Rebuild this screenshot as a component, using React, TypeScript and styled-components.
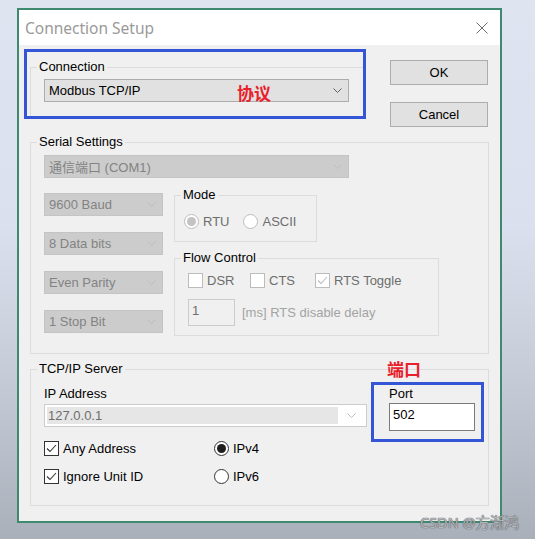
import React from 'react';
import styled, { createGlobalStyle } from 'styled-components';

const GlobalStyle = createGlobalStyle`
  html, body {
    margin: 0;
    padding: 0;
  }
  body {
    width: 535px;
    height: 539px;
    overflow: hidden;
    background: linear-gradient(180deg, #dfe4f1 0%, #dae0ed 42%, #c4cad5 72%, #a9b0ba 100%);
    font-family: "Liberation Sans", Arial, "Noto Sans CJK SC", sans-serif;
    font-size: 13px;
    color: #000;
  }
`;

const Page = styled.div`
  position: relative;
  box-sizing: border-box;
  width: 535px;
  height: 539px;
  padding: 8px 0 0 17px;
`;

const Window = styled.div`
  box-sizing: border-box;
  width: 485px;
  height: 515px;
  border: 2px solid #3f8a6f;
  background: #f0f0f0;
  display: flex;
  flex-direction: column;
`;

const TitleBar = styled.div`
  height: 35px;
  flex: none;
  background: #fff;
  display: flex;
  align-items: center;
  justify-content: space-between;
  padding: 0 12px 0 6px;
`;

const Title = styled.span`
  font-family: "Noto Sans", "Open Sans", sans-serif;
  font-size: 15.5px;
  color: #9a9a9a;
`;

const Body = styled.div`
  display: flex;
  flex-direction: column;
  padding: 4px 11px 0 5px;
`;

const TopRow = styled.div`
  display: flex;
  align-items: flex-start;
  gap: 24px;
`;

const Highlight = styled.div<{ $w: number; $h: number; $clip?: boolean }>`
  position: relative;
  box-sizing: border-box;
  flex: none;
  width: ${p => p.$w}px;
  height: ${p => p.$h}px;
  border: 3px solid #3456d6;
  overflow: ${p => (p.$clip ? 'hidden' : 'visible')};
`;

const PortHighlight = styled(Highlight)`
  margin-top: 5px;
`;

const Note = styled.span<{ $x: number; $y: number }>`
  position: absolute;
  left: ${p => p.$x}px;
  top: ${p => p.$y}px;
  font-family: "Noto Sans CJK SC", sans-serif;
  font-size: 17px;
  line-height: 17px;
  font-weight: 700;
  color: #e8202a;
  white-space: nowrap;
`;

const ButtonColumn = styled.div`
  display: flex;
  flex-direction: column;
  gap: 17px;
  padding-top: 11px;
`;

const Button = styled.button`
  box-sizing: border-box;
  width: 98px;
  height: 25px;
  margin: 0;
  padding: 0;
  border: 1px solid #adadad;
  background: #e1e1e1;
  font-family: inherit;
  font-size: 13px;
  color: #000;
`;

const GroupBox = styled.fieldset<{ $w: number; $h?: number }>`
  box-sizing: border-box;
  flex: none;
  min-width: 0;
  margin: 0;
  padding: 0;
  width: ${p => p.$w}px;
  ${p => (p.$h ? `height: ${p.$h}px;` : '')}
  border: 1px solid #dcdcdc;
`;

const Legend = styled.legend`
  margin-left: 6px;
  padding: 0 2px;
  font-size: 13px;
  line-height: 16px;
  color: #000;
`;

const ConnectionGroup = styled(GroupBox)`
  margin: 7px 0 0 3px;
`;

const ConnectionBody = styled.div`
  padding: 4px 0 0 13px;
`;

const SerialGroup = styled(GroupBox)`
  margin: 7px 0 0 6px;
`;

const SerialBody = styled.div`
  padding: 5px 13px 17px 13px;
`;

const SerialRow = styled.div`
  display: flex;
  gap: 11px;
  margin-top: 9px;
`;

const ComboStack = styled.div`
  display: flex;
  flex-direction: column;
  gap: 16px;
  padding-top: 6px;
`;

const SideStack = styled.div`
  display: flex;
  flex-direction: column;
  gap: 8px;
`;

const ModeBody = styled.div`
  display: flex;
  gap: 14px;
  padding: 11px 0 12px 9px;
`;

const FlowBody = styled.div`
  padding: 7px 0 9px 13px;
`;

const FlowChecks = styled.div`
  display: grid;
  grid-template-columns: 62px 65px auto;
`;

const DelayRow = styled.div`
  display: flex;
  align-items: center;
  gap: 7px;
  margin-top: 11px;
`;

const DelayLabel = styled.span`
  color: #a3a3a3;
`;

const TcpGroup = styled(GroupBox)`
  margin: 7px 0 0 6px;
`;

const TcpBody = styled.div`
  display: flex;
  align-items: flex-start;
  gap: 4px;
  padding: 0 0 21px 13px;
`;

const IpColumn = styled.div`
  display: flex;
  flex-direction: column;
  padding-top: 9px;
`;

const FieldLabel = styled.span`
  line-height: 15px;
  height: 15px;
`;

const OptionGrid = styled.div`
  display: grid;
  grid-template-columns: 170px auto;
  row-gap: 13px;
  margin-top: 14px;
`;

const PortBody = styled.div`
  display: flex;
  flex-direction: column;
  gap: 2px;
  padding: 1px 0 0 15px;
`;

const Combo = styled.div<{ $w: number; $disabled?: boolean }>`
  box-sizing: border-box;
  width: ${p => p.$w}px;
  height: 23px;
  display: flex;
  align-items: center;
  justify-content: space-between;
  padding: 0 6px 0 4px;
  background: ${p => (p.$disabled ? '#cccccc' : '#e1e1e1')};
  border: 1px solid ${p => (p.$disabled ? '#c4c4c4' : '#adadad')};
  color: ${p => (p.$disabled ? '#838383' : '#000')};
  white-space: nowrap;
`;

const EditCombo = styled.div`
  box-sizing: border-box;
  width: 323px;
  height: 23px;
  margin-top: 3px;
  display: flex;
  align-items: center;
  gap: 9px;
  padding: 2px 10px 2px 2px;
  background: #fff;
  border: 1px solid #cccccc;
`;

const EditField = styled.span`
  flex: 1;
  height: 100%;
  display: flex;
  align-items: center;
  padding-left: 1px;
  background: #e6e6e6;
  color: #6d6d6d;
`;

const TextBox = styled.div<{ $w: number; $h: number; $disabled?: boolean }>`
  box-sizing: border-box;
  width: ${p => p.$w}px;
  height: ${p => p.$h}px;
  padding: 3px 3px 0;
  line-height: 15px;
  background: ${p => (p.$disabled ? '#f0f0f0' : '#fff')};
  border: 1px solid ${p => (p.$disabled ? '#cccccc' : '#7a7a7a')};
  color: ${p => (p.$disabled ? '#6d6d6d' : '#000')};
`;

const Option = styled.label<{ $disabled?: boolean }>`
  display: flex;
  align-items: center;
  gap: 4px;
  height: 15px;
  line-height: 15px;
  color: ${p => (p.$disabled ? '#6d6d6d' : '#000')};
  white-space: nowrap;
`;

const Box = styled.span<{ $disabled?: boolean }>`
  box-sizing: border-box;
  width: 15px;
  height: 15px;
  flex: none;
  display: flex;
  align-items: center;
  justify-content: center;
  background: #fff;
  border: 1px solid ${p => (p.$disabled ? '#bcbcbc' : '#333')};
`;

const Round = styled.span<{ $disabled?: boolean; $on?: boolean }>`
  box-sizing: border-box;
  width: 15px;
  height: 15px;
  flex: none;
  display: flex;
  align-items: center;
  justify-content: center;
  border-radius: 50%;
  background: #fff;
  border: 1px solid ${p => (p.$disabled ? '#bcbcbc' : '#333')};
  &::after {
    content: '';
    display: ${p => (p.$on ? 'block' : 'none')};
    width: 9px;
    height: 9px;
    border-radius: 50%;
    background: ${p => (p.$disabled ? '#c3c3c3' : '#1e1e1e')};
  }
`;

const Watermark = styled.span`
  position: absolute;
  left: 420px;
  top: 511px;
  font-family: "Noto Sans", "Noto Sans CJK SC", sans-serif;
  font-size: 14.5px;
  color: #b4b6ba;
  text-shadow: 0 0 1px #5a5d62, 0 0 1px #5a5d62;
`;

function Chevron({ color }: { color: string }) {
  return (
    <svg width="9" height="5" viewBox="0 0 9 5">
      <polyline points="0.5,0.5 4.5,4.5 8.5,0.5" fill="none" stroke={color} strokeWidth="1" />
    </svg>
  );
}

function Check({ color }: { color: string }) {
  return (
    <svg width="11" height="9" viewBox="0 0 11 9">
      <polyline points="1,4.5 4,7.5 10,1" fill="none" stroke={color} strokeWidth="1.1" />
    </svg>
  );
}

function CheckBox({ label, checked, disabled }: { label: string; checked?: boolean; disabled?: boolean }) {
  return (
    <Option $disabled={disabled}>
      <Box $disabled={disabled}>{checked && <Check color={disabled ? '#bcbcbc' : '#333'} />}</Box>
      {label}
    </Option>
  );
}

function RadioButton({ label, checked, disabled }: { label: string; checked?: boolean; disabled?: boolean }) {
  return (
    <Option $disabled={disabled}>
      <Round $disabled={disabled} $on={checked} />
      {label}
    </Option>
  );
}

function Select({ value, width, disabled }: { value: string; width: number; disabled?: boolean }) {
  return (
    <Combo $w={width} $disabled={disabled}>
      <span>{value}</span>
      <Chevron color={disabled ? '#bdbdbd' : '#606060'} />
    </Combo>
  );
}

const serialOptions = ['9600 Baud', '8 Data bits', 'Even Parity', '1 Stop Bit'];

export default function App() {
  return (
    <Page>
      <GlobalStyle />
      <Window>
        <TitleBar>
          <Title>Connection Setup</Title>
          <svg width="12" height="12" viewBox="0 0 12 12">
            <path d="M0.5 0.5 L11.5 11.5 M11.5 0.5 L0.5 11.5" stroke="#6a6a6a" strokeWidth="1" />
          </svg>
        </TitleBar>
        <Body>
          <TopRow>
            <Highlight $w={342} $h={70} $clip>
              <ConnectionGroup $w={400} $h={100}>
                <Legend>Connection</Legend>
                <ConnectionBody>
                  <Select value="Modbus TCP/IP" width={305} />
                </ConnectionBody>
              </ConnectionGroup>
              <Note $x={210} $y={32}>协议</Note>
            </Highlight>
            <ButtonColumn>
              <Button>OK</Button>
              <Button>Cancel</Button>
            </ButtonColumn>
          </TopRow>

          <SerialGroup $w={459}>
            <Legend>Serial Settings</Legend>
            <SerialBody>
              <Select value="通信端口 (COM1)" width={305} disabled />
              <SerialRow>
                <ComboStack>
                  {serialOptions.map(o => (
                    <Select key={o} value={o} width={119} disabled />
                  ))}
                </ComboStack>
                <SideStack>
                  <GroupBox $w={143}>
                    <Legend>Mode</Legend>
                    <ModeBody>
                      <RadioButton label="RTU" checked disabled />
                      <RadioButton label="ASCII" disabled />
                    </ModeBody>
                  </GroupBox>
                  <GroupBox $w={265}>
                    <Legend>Flow Control</Legend>
                    <FlowBody>
                      <FlowChecks>
                        <CheckBox label="DSR" disabled />
                        <CheckBox label="CTS" disabled />
                        <CheckBox label="RTS Toggle" checked disabled />
                      </FlowChecks>
                      <DelayRow>
                        <TextBox $w={47} $h={27} $disabled>1</TextBox>
                        <DelayLabel>[ms] RTS disable delay</DelayLabel>
                      </DelayRow>
                    </FlowBody>
                  </GroupBox>
                </SideStack>
              </SerialRow>
            </SerialBody>
          </SerialGroup>

          <TcpGroup $w={459}>
            <Legend>TCP/IP Server</Legend>
            <TcpBody>
              <IpColumn>
                <FieldLabel>IP Address</FieldLabel>
                <EditCombo>
                  <EditField>127.0.0.1</EditField>
                  <Chevron color="#bdbdbd" />
                </EditCombo>
                <OptionGrid>
                  <CheckBox label="Any Address" checked />
                  <RadioButton label="IPv4" checked />
                  <CheckBox label="Ignore Unit ID" checked />
                  <RadioButton label="IPv6" />
                </OptionGrid>
              </IpColumn>
              <PortHighlight $w={113} $h={60}>
                <Note $x={13} $y={-25}>端口</Note>
                <PortBody>
                  <FieldLabel>Port</FieldLabel>
                  <TextBox $w={86} $h={28}>502</TextBox>
                </PortBody>
              </PortHighlight>
            </TcpBody>
          </TcpGroup>
        </Body>
      </Window>
      <Watermark>CSDN @方渐鸿</Watermark>
    </Page>
  );
}
